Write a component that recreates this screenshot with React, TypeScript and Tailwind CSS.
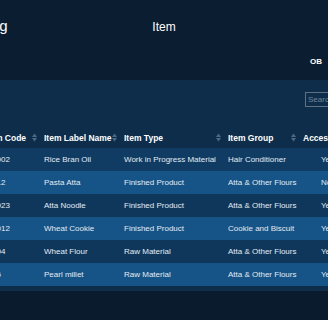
import React from 'react';

interface ItemRow {
  code: string;
  label: string;
  type: string;
  group: string;
  access: string;
}

const rows: ItemRow[] = [
  { code: 'IT1002', label: 'Rice Bran Oil', type: 'Work in Progress Material', group: 'Hair Conditioner', access: 'Yes' },
  { code: 'IT012', label: 'Pasta Atta', type: 'Finished Product', group: 'Atta & Other Flours', access: 'No' },
  { code: 'IT1023', label: 'Atta Noodle', type: 'Finished Product', group: 'Atta & Other Flours', access: 'Yes' },
  { code: 'IT1012', label: 'Wheat Cookie', type: 'Finished Product', group: 'Cookie and Biscuit', access: 'Yes' },
  { code: 'IT004', label: 'Wheat Flour', type: 'Raw Material', group: 'Atta & Other Flours', access: 'Yes' },
  { code: 'IT06', label: 'Pearl millet', type: 'Raw Material', group: 'Atta & Other Flours', access: 'Yes' },
];

const rowColors = ['bg-[#103c63]', 'bg-[#165386]', 'bg-[#0f375c]', 'bg-[#165386]', 'bg-[#0f375c]', 'bg-[#165386]'];

const cols = 'grid grid-cols-[59px_80px_104px_75px_61px]';

const SortIcon = () => (
  <svg width="5" height="9" viewBox="0 0 5 9" className="shrink-0">
    <path d="M0 4 L2.5 0.5 L5 4 Z" fill="#4d6985" />
    <path d="M0 5 L5 5 L2.5 8.5 Z" fill="#4d6985" />
  </svg>
);

const HeadCell: React.FC<{ label: string; sort?: boolean }> = ({ label, sort = true }) => (
  <div className="flex items-center justify-between pl-[6px] pr-[1px] whitespace-nowrap overflow-hidden">
    <span>{label}</span>
    {sort && <SortIcon />}
  </div>
);

const App: React.FC = () => {
  return (
    <div className="w-[328px] h-[320px] overflow-hidden bg-[#0a1b2d] text-white font-['Liberation_Sans',Arial,sans-serif]">
      {/* top bar */}
      <div className="h-[80px] flex flex-col bg-[#0a1d31]">
        <div className="grid grid-cols-[1fr_auto_1fr] items-start">
          <div className="pt-[17px] text-[15px] leading-[17px] whitespace-nowrap ml-[-44px]">Catalog</div>
          <div className="pt-[20px] text-[12px] leading-[14px]">Item</div>
          <div />
        </div>
        <div className="flex justify-end pr-[6px] mt-[23px]">
          <span className="text-[8px] leading-[10px] font-bold">OB</span>
        </div>
      </div>

      {/* panel */}
      <div className="h-[211px] bg-[#0d2d4b] overflow-hidden">
        <div className="flex pl-[305px] pt-[12px]">
          <div className="w-[60px] h-[15px] shrink-0 border border-[#5f7285] flex items-center pl-[2px] text-[8px] text-[#71859a]">
            Search
          </div>
        </div>

        <div className="ml-[-21px] w-[379px] mt-[20px]">
          <div className={`${cols} h-[21px] text-[8.5px] font-bold leading-[10px]`}>
            <HeadCell label="Item Code" />
            <HeadCell label="Item Label Name" />
            <HeadCell label="Item Type" />
            <HeadCell label="Item Group" />
            <HeadCell label="Accessible" sort={false} />
          </div>
          {rows.map((r, i) => (
            <div key={r.label} className={`${cols} h-[23px] items-center text-[8px] leading-[10px] text-[#e2ebf3] ${rowColors[i]}`}>
              <div className="pl-[6px] whitespace-nowrap">{r.code}</div>
              <div className="pl-[6px] whitespace-nowrap">{r.label}</div>
              <div className="pl-[6px] whitespace-nowrap">{r.type}</div>
              <div className="pl-[6px] whitespace-nowrap">{r.group}</div>
              <div className="pl-[24px] whitespace-nowrap">{r.access}</div>
            </div>
          ))}
        </div>
      </div>
    </div>
  );
};

export default App;
